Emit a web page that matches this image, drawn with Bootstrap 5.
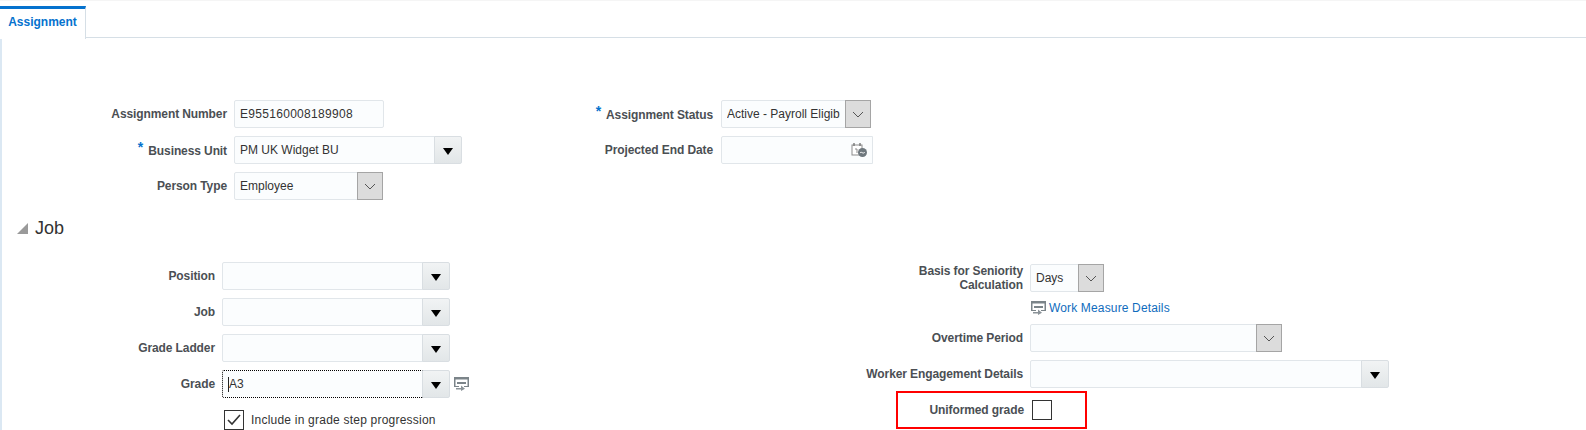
<!DOCTYPE html>
<html lang="en">
<head>
<meta charset="UTF-8">
<title>Assignment</title>
<link href="https://cdn.jsdelivr.net/npm/bootstrap@5.3.0/dist/css/bootstrap.min.css" rel="stylesheet">
<style>
    html, body { height: 430px; overflow: hidden; }
    body { font-family: "Liberation Sans", Arial, sans-serif; font-size: 12px; color: #333; background: #fff; }
    /* tab strip */
    .tab-strip { height: 38px; padding-top: 5px; border-top: 1px solid #f5f5f5; border-bottom: 1px solid #d6dfe6; }
    .tab-item { width: 86px; height: 33px; margin-top: -1px; border-top: 3px solid #0572ce; border-right: 1px solid #d6dfe6; background: #fff; color: #0572ce; font-weight: 700; line-height: 26px; text-align: center; text-decoration: none; position: relative; top: 1px; }
    .page-body { height: 392px; border-left: 2px solid #dbe8f3; }
    .top-form { padding-top: 62px; }
    .col-one { width: 480px; }
    .job-left { width: 700px; }
    .field-row { min-height: 28px; }
    .field-label { font-weight: 700; color: #4b4f54; text-align: right; line-height: 14px; flex-shrink: 0; letter-spacing: -.1px; }
    .req { color: #0572ce; font-size: 14px; position: relative; top: -3px; margin-right: 2px; }
    .lbl-a { width: 225px; margin-right: 7px; }
    .lbl-b { width: 231px; margin-right: 8px; }
    .lbl-c { width: 213px; margin-right: 7px; }
    .lbl-d { width: 321px; margin-right: 7px; }
    /* inputs */
    .field-box { height: 28px; flex-wrap: nowrap; }
    .field-box .form-control { height: 28px; min-height: 28px; padding: 0 5px; font-size: 12px; color: #333; background-color: #fbfdfe; border: 1px solid #e1e6ea; border-radius: 2px; box-shadow: none; }
    .field-box .num-value { letter-spacing: .3px; }
    .w-149 { width: 149px; }
    .w-150 { width: 150px; }
    .w-152 { width: 152px; }
    .w-228 { width: 228px; }
    .w-74 { width: 74px; }
    .w-252 { width: 252px; }
    .w-359 { width: 359px; }
    .drop-btn { width: 28px; padding: 0; background: linear-gradient(#f1f3f4, #e2e6e8); border: 1px solid #d9dee2; border-radius: 0 2px 2px 0; display: flex; align-items: center; justify-content: center; }
    .drop-btn::before { content: ""; border-left: 5px solid transparent; border-right: 5px solid transparent; border-top: 7px solid #000; margin-top: 2px; }
    .pick-btn { width: 26px; padding: 0; background: #dcdcdc; border: 1px solid #a5a5a5; border-radius: 0; display: flex; align-items: center; justify-content: center; }
    .date-icon { right: 5px; top: 6px; z-index: 5; }
    .grade-input.form-control { border: 1px dotted #000; background-image: linear-gradient(#222, #222); background-size: 1px 15px; background-position: 5px 6px; background-repeat: no-repeat; padding-left: 6px; }
    .detail-icon { flex-shrink: 0; }
    /* job section */
    .section-head { height: 24px; margin: 16px 0 22px 15px; font-size: 18px; color: #333; gap: 7px; }
    .twist { width: 0; height: 0; border-left: 11px solid transparent; border-bottom: 11px solid #9a9a9a; margin-top: 1px; }
    .job-right { margin-top: 2px; }
    .link-row { height: 16px; padding-left: 329px; gap: 3px; letter-spacing: .15px; }
    .measure-link { color: #0f6cbd; text-decoration: none; }
    .check-row { margin: 4px 0 0 222px; gap: 7px; letter-spacing: .22px; }
    .tick-box { width: 20px; height: 20px; border: 1px solid #333; background: #fff; display: flex; align-items: center; justify-content: center; flex-shrink: 0; }
    .flag-row { width: 191px; height: 38px; margin: -5px 0 0 194px; border: 2px solid #f00; padding-bottom: 1px; }
    .flag-row .field-label { width: 126px; margin-right: 8px; }
</style>
</head>
<body>
    <!-- Tabs -->
    <div class="tab-strip d-flex">
        <a class="tab-item d-block" href="#">Assignment</a>
    </div>

    <div class="page-body">
        <!-- Top fields -->
        <div class="top-form d-flex">
            <div class="col-one d-flex flex-column gap-2">
                <div class="field-row d-flex align-items-center">
                    <div class="field-label lbl-a">Assignment Number</div>
                    <div class="input-group field-box w-150"><input class="form-control num-value" value="E955160008189908"></div>
                </div>
                <div class="field-row d-flex align-items-center">
                    <div class="field-label lbl-a"><span class="req">*</span> Business Unit</div>
                    <div class="input-group field-box w-228"><input class="form-control" value="PM UK Widget BU"><button class="btn drop-btn" type="button" aria-label="Open"></button></div>
                </div>
                <div class="field-row d-flex align-items-center">
                    <div class="field-label lbl-a">Person Type</div>
                    <div class="input-group field-box w-149"><input class="form-control" value="Employee"><button class="btn pick-btn" type="button" aria-label="Open"><svg width="12" height="7" viewBox="0 0 12 7"><path d="M1 1l5 5 5-5" fill="none" stroke="#555" stroke-width="1"/></svg></button></div>
                </div>
            </div>
            <div class="d-flex flex-column gap-2">
                <div class="field-row d-flex align-items-center">
                    <div class="field-label lbl-b"><span class="req">*</span> Assignment Status</div>
                    <div class="input-group field-box w-150"><input class="form-control" value="Active - Payroll Eligible"><button class="btn pick-btn" type="button" aria-label="Open"><svg width="12" height="7" viewBox="0 0 12 7"><path d="M1 1l5 5 5-5" fill="none" stroke="#555" stroke-width="1"/></svg></button></div>
                </div>
                <div class="field-row d-flex align-items-center">
                    <div class="field-label lbl-b">Projected End Date</div>
                    <div class="input-group field-box w-152 position-relative">
                        <input class="form-control">
                        <svg class="date-icon position-absolute" width="17" height="16" viewBox="0 0 17 16"><rect x="1" y="3" width="10" height="10" fill="#fff" stroke="#8d8d8d"/><path d="M3 1v3M9 1v3" stroke="#777" stroke-width="1.4"/><path d="M4 7h2v4" fill="none" stroke="#8d8d8d"/><circle cx="11.5" cy="10.5" r="4.5" fill="#6f787e"/><path d="M9 11c1-1.5 2-.2 3 0s1.500-.5 2-1" fill="none" stroke="#fff"/></svg>
                    </div>
                </div>
            </div>
        </div>

        <!-- Job -->
        <div class="section-head d-flex align-items-center">
            <span class="twist"></span>
            <span>Job</span>
        </div>
        <div class="d-flex">
            <div class="job-left d-flex flex-column gap-2">
                <div class="field-row d-flex align-items-center">
                    <div class="field-label lbl-c">Position</div>
                    <div class="input-group field-box w-228"><input class="form-control"><button class="btn drop-btn" type="button" aria-label="Open"></button></div>
                </div>
                <div class="field-row d-flex align-items-center">
                    <div class="field-label lbl-c">Job</div>
                    <div class="input-group field-box w-228"><input class="form-control"><button class="btn drop-btn" type="button" aria-label="Open"></button></div>
                </div>
                <div class="field-row d-flex align-items-center">
                    <div class="field-label lbl-c">Grade Ladder</div>
                    <div class="input-group field-box w-228"><input class="form-control"><button class="btn drop-btn" type="button" aria-label="Open"></button></div>
                </div>
                <div class="field-row d-flex align-items-center">
                    <div class="field-label lbl-c">Grade</div>
                    <div class="input-group field-box w-228"><input class="form-control grade-input" value="A3"><button class="btn drop-btn" type="button" aria-label="Open"></button></div>
                    <svg class="detail-icon ms-1" width="15" height="14" viewBox="0 0 15 14"><path d="M0 0h15v2.500H0zM0 2.500h1.500V9H0zM13.500 2.500H15V9h-1.500zM3 5h9v2H3zM0 9h5v1H0zM10 9h5v1h-5z" fill="#7b8489"/><path d="M2 11h5V8.500l4 3.200L7 14v-1.500H2z" fill="#8b9398"/></svg>
                </div>
                <div class="check-row d-flex align-items-center">
                    <span class="tick-box"><svg width="14" height="12" viewBox="0 0 14 12"><path d="M1 6l4 4 8-9" fill="none" stroke="#333" stroke-width="1.600"/></svg></span>
                    <span>Include in grade step progression</span>
                </div>
            </div>
            <div class="job-right d-flex flex-column gap-2">
                <div class="field-row d-flex align-items-center">
                    <div class="field-label lbl-d">Basis for Seniority<br>Calculation</div>
                    <div class="input-group field-box w-74"><input class="form-control" value="Days"><button class="btn pick-btn" type="button" aria-label="Open"><svg width="12" height="7" viewBox="0 0 12 7"><path d="M1 1l5 5 5-5" fill="none" stroke="#555" stroke-width="1"/></svg></button></div>
                </div>
                <div class="link-row d-flex align-items-center">
                    <svg class="detail-icon" width="15" height="14" viewBox="0 0 15 14"><path d="M0 0h15v2.500H0zM0 2.500h1.500V9H0zM13.500 2.500H15V9h-1.500zM3 5h9v2H3zM0 9h5v1H0zM10 9h5v1h-5z" fill="#7b8489"/><path d="M2 11h5V8.500l4 3.200L7 14v-1.500H2z" fill="#8b9398"/></svg>
                    <a class="measure-link" href="#">Work Measure Details</a>
                </div>
                <div class="field-row d-flex align-items-center">
                    <div class="field-label lbl-d">Overtime Period</div>
                    <div class="input-group field-box w-252"><input class="form-control"><button class="btn pick-btn" type="button" aria-label="Open"><svg width="12" height="7" viewBox="0 0 12 7"><path d="M1 1l5 5 5-5" fill="none" stroke="#555" stroke-width="1"/></svg></button></div>
                </div>
                <div class="field-row d-flex align-items-center">
                    <div class="field-label lbl-d">Worker Engagement Details</div>
                    <div class="input-group field-box w-359"><input class="form-control"><button class="btn drop-btn" type="button" aria-label="Open"></button></div>
                </div>
                <div class="flag-row d-flex align-items-center">
                    <div class="field-label">Uniformed grade</div>
                    <span class="tick-box"></span>
                </div>
            </div>
        </div>
    </div>

    <script src="https://cdn.jsdelivr.net/npm/bootstrap@5.3.0/dist/js/bootstrap.bundle.min.js"></script>
</body>
</html>
